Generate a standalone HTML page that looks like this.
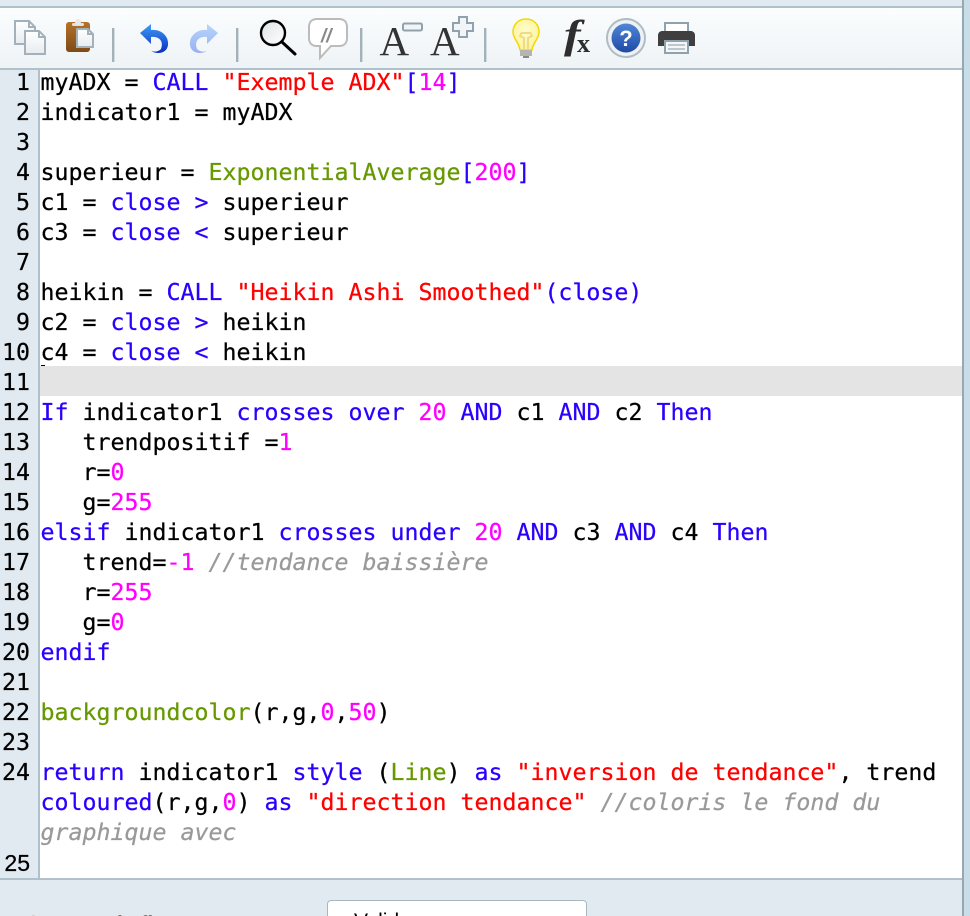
<!DOCTYPE html>
<html><head><meta charset="utf-8">
<style>
html,body{margin:0;padding:0;width:970px;height:916px;overflow:hidden;background:#e2eaf1}
#wrap{position:relative;width:970px;height:916px;overflow:hidden}
.a{position:absolute}
.l{position:absolute;left:40.5px;height:30px;font:23.25px/30px "DejaVu Sans Mono",monospace;white-space:pre;color:#000;-webkit-text-stroke:.25px currentColor;margin-top:2px}
.n{position:absolute;left:0;width:30px;text-align:right;font:23.25px/30px "DejaVu Sans Mono",monospace;color:#000;-webkit-text-stroke:.25px currentColor;margin-top:2px}
.b{color:#2a00ff}.r{color:#f00}.m{color:#f0f}.g{color:#690}.c{color:#999;font-style:italic}
</style></head><body><div id="wrap">
<div class="a" style="left:0;top:0;width:962px;height:6px;background:#e2eaf1"></div>
<div class="a" style="left:0;top:6px;width:962px;height:2px;background:#b0c1cb"></div>
<div class="a" style="left:0;top:8px;width:962px;height:60px;background:linear-gradient(#fbfdfe,#eef3f6)"></div>
<div class="a" style="left:0;top:68px;width:962px;height:2px;background:#b0c1cb"></div>
<div class="a" style="left:0;top:70px;width:962px;height:808px;background:#fff"></div>
<div class="a" style="left:0;top:70px;width:38px;height:808px;background:#e2eaf1"></div>
<div class="a" style="left:38px;top:70px;width:2px;height:808px;background:#b0c1cb"></div>
<div class="a" style="left:40px;top:366px;width:922px;height:30px;background:#e4e4e4"></div>
<div class="a" style="left:0;top:878px;width:962px;height:2px;background:#b0c1cb"></div>
<div class="a" style="left:962px;top:0;width:2px;height:916px;background:#96a8b2"></div>
<div class="a" style="left:964px;top:0;width:6px;height:916px;background:#c9dde8"></div>
<div class="a" style="left:41px;top:365px;width:4px;height:1px;background:#000"></div>

<svg class="a" style="left:0;top:0" width="720" height="70" viewBox="0 0 720 70">
<defs>
<linearGradient id="dg" x1="0" y1="0" x2="0" y2="1"><stop offset="0" stop-color="#fff"/><stop offset="1" stop-color="#e8ecef"/></linearGradient>
<linearGradient id="cb" x1="0" y1="0" x2="0" y2="1"><stop offset="0" stop-color="#b5722a"/><stop offset="1" stop-color="#7d4a16"/></linearGradient>
<linearGradient id="un" x1="0" y1="0" x2="0" y2="1"><stop offset="0" stop-color="#3f9cf5"/><stop offset="1" stop-color="#0a2fc4"/></linearGradient>
<linearGradient id="re" x1="0" y1="0" x2="0" y2="1"><stop offset="0" stop-color="#b5d6fb"/><stop offset="1" stop-color="#9ab0f2"/></linearGradient>
<linearGradient id="he" x1="0" y1="0" x2="0" y2="1"><stop offset="0" stop-color="#4f86d6"/><stop offset="1" stop-color="#1f4aa5"/></linearGradient>
<linearGradient id="mg" x1="0" y1="0" x2="1" y2="1"><stop offset="0" stop-color="#dfe3e6"/><stop offset="1" stop-color="#fff"/></linearGradient>
<radialGradient id="bu" cx=".5" cy=".4" r=".6"><stop offset="0" stop-color="#fffdd0"/><stop offset="1" stop-color="#fef39a"/></radialGradient>
</defs>
<!-- copy -->
<path d="M15 21H29L35 27V44H15Z" fill="url(#dg)" stroke="#a3b2ba" stroke-width="2"/>
<path d="M29 21V27H35" fill="none" stroke="#a3b2ba" stroke-width="2"/>
<path d="M25 31H39L45 37V54H25Z" fill="url(#dg)" stroke="#a3b2ba" stroke-width="2"/>
<path d="M39 31V37H45" fill="none" stroke="#a3b2ba" stroke-width="2"/>
<!-- paste -->
<rect x="66" y="22" width="24" height="30" rx="3" fill="url(#cb)"/>
<rect x="72" y="23" width="12" height="3" rx="1.500" fill="#dfe3e5"/>
<circle cx="78" cy="22" r="3" fill="#e6e8ea"/>
<path d="M77 29H88L93 34V47H77Z" fill="url(#dg)" stroke="#a3b2ba" stroke-width="2"/>
<path d="M88 29V34H93" fill="none" stroke="#a3b2ba" stroke-width="2"/>
<!-- separators -->
<rect x="112" y="28" width="2.4" height="34" fill="#a3b2ba"/>
<rect x="236" y="28" width="2.4" height="34" fill="#a3b2ba"/>
<rect x="360" y="28" width="2.4" height="34" fill="#a3b2ba"/>
<rect x="484" y="28" width="2.4" height="34" fill="#a3b2ba"/>
<!-- undo -->
<path d="M151 24L140 33L151 44V37C159 36 164 41 161 49C158 52 154 52 151 51C158 55 167 53 168 45C169 36 161 29 151 30Z" fill="url(#un)"/>
<!-- redo -->
<path d="M207 24L218 33L207 44V37C199 36 194 41 197 49C200 52 204 52 207 51C200 55 191 53 190 45C189 36 197 29 207 30Z" fill="url(#re)"/>
<!-- magnifier -->
<circle cx="273" cy="33" r="12" fill="url(#mg)" stroke="#000" stroke-width="2.4"/>
<path d="M282 42L295 54" stroke="#000" stroke-width="3" stroke-linecap="round"/>
<!-- comment bubble -->
<path d="M317 19H339C344 19 347 22 347 27V38C347 43 344 46 339 46H331L320 58V46H317C312 46 309 43 309 38V27C309 22 312 19 317 19Z" fill="#fff" stroke="#bbb" stroke-width="2"/>
<text x="321" y="42" font-family="Liberation Sans" font-style="italic" font-weight="bold" font-size="19" fill="#888">//</text>
<!-- font smaller/larger -->
<text x="379.500" y="55" font-family="Liberation Serif" font-size="41" fill="#333">A</text>
<rect x="403" y="23.500" width="19" height="7" rx="1.500" fill="#f2f5f7" stroke="#8fa2ad" stroke-width="2"/>
<text x="430" y="55" font-family="Liberation Serif" font-size="41" fill="#333">A</text>
<path d="M459 17H467V23H473V31H467V37H459V31H453V23H459Z" fill="#f2f5f7" stroke="#8fa2ad" stroke-width="2"/>
<!-- bulb -->
<path d="M526 19C518 19 513 25 513 32C513 39 519 42 520 50H532C533 42 539 39 539 32C539 25 534 19 526 19Z" fill="url(#bu)" stroke="#f5d800" stroke-width="1.500"/>
<path d="M522 32L520 36L524 38V50M530 32L532 36L528 38V50M522 33H530" fill="none" stroke="#eddc85" stroke-width="2"/>
<rect x="520" y="50" width="12" height="6" fill="#b5b5b0"/>
<rect x="523" y="56" width="6" height="2" fill="#888"/>
<!-- fx -->
<text transform="translate(564 48) scale(1.25 1)" font-family="Liberation Serif" font-style="italic" font-weight="bold" font-size="40" fill="#2e2e2e">f</text>
<text x="577" y="52" font-family="Liberation Serif" font-weight="bold" font-size="26" fill="#2e2e2e">x</text>
<!-- help -->
<circle cx="626" cy="38" r="19" fill="#eef2f4" stroke="#aebcc4" stroke-width="2"/>
<circle cx="626" cy="38" r="14.500" fill="url(#he)"/>
<text x="626" y="46" text-anchor="middle" font-family="Liberation Sans" font-weight="bold" font-size="22" fill="#fff">?</text>
<!-- printer -->
<rect x="665" y="23" width="23" height="12" fill="#fff" stroke="#8fa2ad" stroke-width="2"/>
<path d="M662 31H691C693 31 695 33 695 35V46H658V35C658 33 660 31 662 31Z" fill="#3f3f3f"/>
<rect x="665" y="41" width="23" height="12" fill="#f4f6f7" stroke="#8fa2ad" stroke-width="2"/>
<path d="M668 45H685M668 49H685" stroke="#a9b8c0" stroke-width="1.500"/>
</svg>

<div class="n" style="top:66px">1</div>
<div class="n" style="top:96px">2</div>
<div class="n" style="top:126px">3</div>
<div class="n" style="top:156px">4</div>
<div class="n" style="top:186px">5</div>
<div class="n" style="top:216px">6</div>
<div class="n" style="top:246px">7</div>
<div class="n" style="top:276px">8</div>
<div class="n" style="top:306px">9</div>
<div class="n" style="top:336px">10</div>
<div class="n" style="top:366px">11</div>
<div class="n" style="top:396px">12</div>
<div class="n" style="top:426px">13</div>
<div class="n" style="top:456px">14</div>
<div class="n" style="top:486px">15</div>
<div class="n" style="top:516px">16</div>
<div class="n" style="top:546px">17</div>
<div class="n" style="top:576px">18</div>
<div class="n" style="top:606px">19</div>
<div class="n" style="top:636px">20</div>
<div class="n" style="top:666px">21</div>
<div class="n" style="top:696px">22</div>
<div class="n" style="top:726px">23</div>
<div class="n" style="top:756px">24</div>
<div class="n" style="top:846px;font-family:'Liberation Sans',sans-serif;font-size:23px">25</div>

<div class="l" style="top:66px">myADX = <span class="b">CALL</span> <span class="r">"Exemple ADX"</span><span class="b">[</span><span class="m">14</span><span class="b">]</span></div>
<div class="l" style="top:96px">indicator1 = myADX</div>
<div class="l" style="top:156px">superieur = <span class="g">ExponentialAverage</span><span class="b">[</span><span class="m">200</span><span class="b">]</span></div>
<div class="l" style="top:186px">c1 = <span class="b">close</span> <span class="b">&gt;</span> superieur</div>
<div class="l" style="top:216px">c3 = <span class="b">close</span> <span class="b">&lt;</span> superieur</div>
<div class="l" style="top:276px">heikin = <span class="b">CALL</span> <span class="r">"Heikin Ashi Smoothed"</span><span class="b">(close)</span></div>
<div class="l" style="top:306px">c2 = <span class="b">close</span> <span class="b">&gt;</span> heikin</div>
<div class="l" style="top:336px">c4 = <span class="b">close</span> <span class="b">&lt;</span> heikin</div>
<div class="l" style="top:396px"><span class="b">If</span> indicator1 <span class="b">crosses over</span> <span class="m">20</span> <span class="b">AND</span> c1 <span class="b">AND</span> c2 <span class="b">Then</span></div>
<div class="l" style="top:426px">   trendpositif =<span class="m">1</span></div>
<div class="l" style="top:456px">   r=<span class="m">0</span></div>
<div class="l" style="top:486px">   g=<span class="m">255</span></div>
<div class="l" style="top:516px"><span class="b">elsif</span> indicator1 <span class="b">crosses under</span> <span class="m">20</span> <span class="b">AND</span> c3 <span class="b">AND</span> c4 <span class="b">Then</span></div>
<div class="l" style="top:546px">   trend=<span class="m">-1</span> <span class="c">//tendance baissière</span></div>
<div class="l" style="top:576px">   r=<span class="m">255</span></div>
<div class="l" style="top:606px">   g=<span class="m">0</span></div>
<div class="l" style="top:636px"><span class="b">endif</span></div>
<div class="l" style="top:696px"><span class="g">backgroundcolor</span>(r,g,<span class="m">0</span>,<span class="m">50</span>)</div>
<div class="l" style="top:756px"><span class="b">return</span> indicator1 <span class="b">style</span> (<span class="g">Line</span>) <span class="b">as</span> <span class="r">"inversion de tendance"</span>, trend</div>
<div class="l" style="top:786px"><span class="b">coloured</span>(r,g,<span class="m">0</span>) <span class="b">as</span> <span class="r">"direction tendance"</span> <span class="c">//coloris le fond du</span></div>
<div class="l" style="top:816px"><span class="c">graphique avec</span></div>

<div class="a" style="left:327px;top:900px;width:258px;height:30px;border:1px solid #a9b8c0;border-radius:4px;background:#fff"></div>
<div class="a" style="left:354px;top:909px;font:21px/26px 'Liberation Sans',sans-serif;color:#000">Valider</div>
<div class="a" style="left:6px;top:912px;font:bold 21px/26px 'Liberation Sans',sans-serif;color:#bbb">Valeurs</div>
<div class="a" style="left:110px;top:912px;font:bold 21px/26px 'Liberation Sans',sans-serif;color:#000">de fin</div>
</div></body></html>
